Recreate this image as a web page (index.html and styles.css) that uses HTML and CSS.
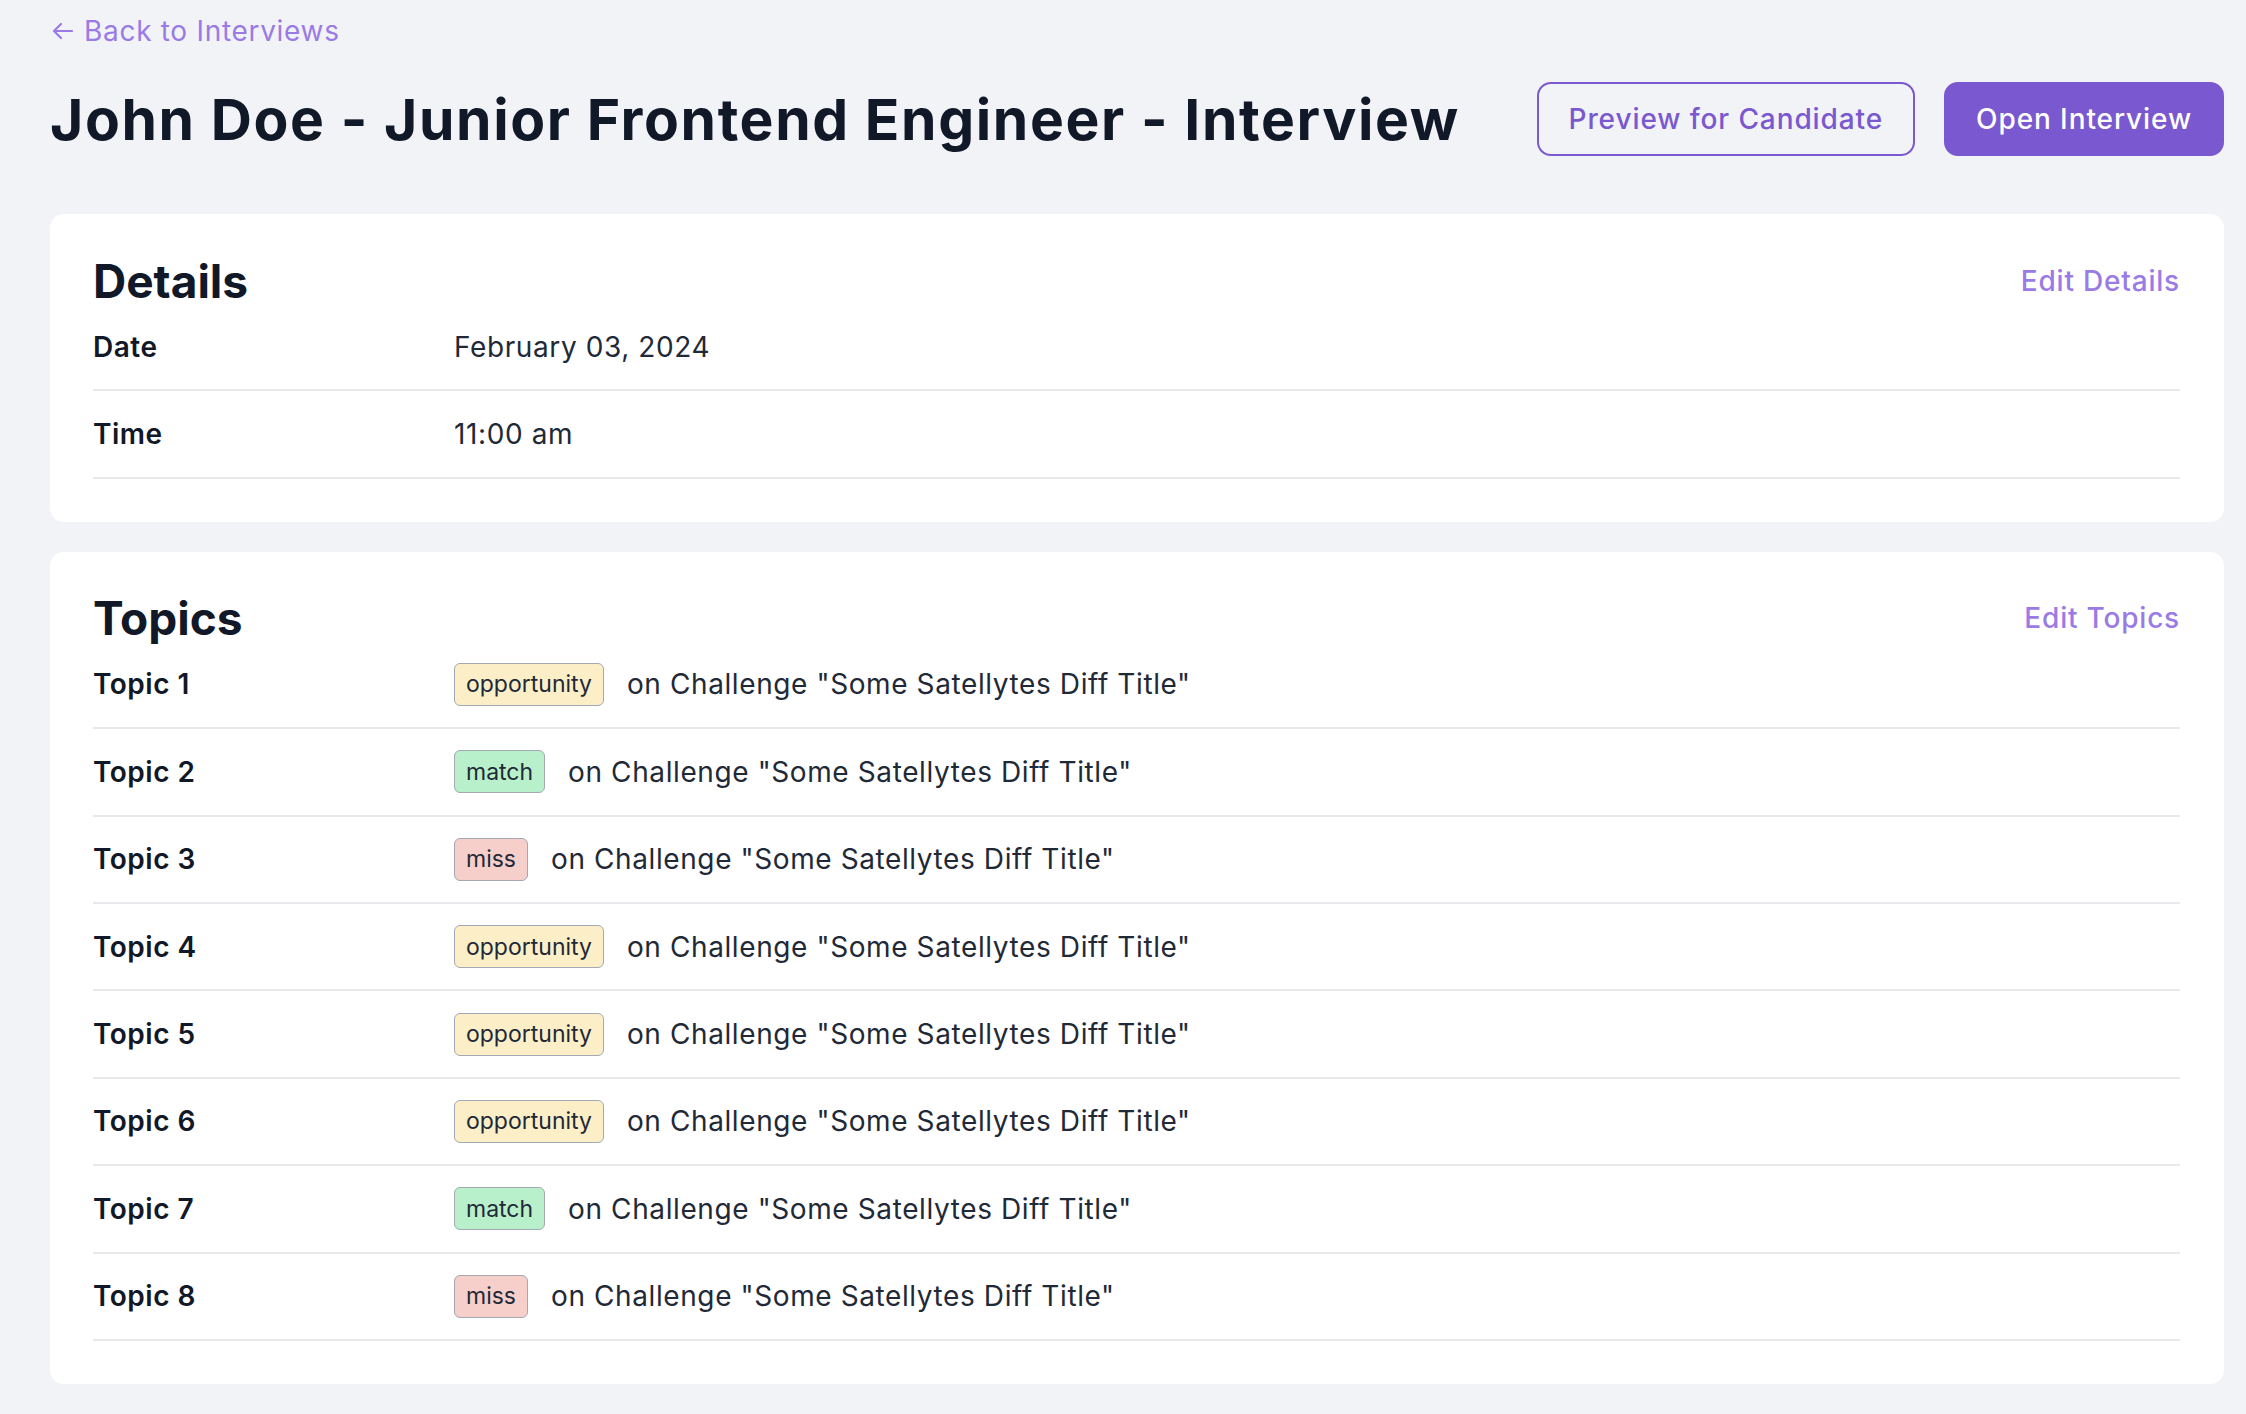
FILE: index.html
```html
<!DOCTYPE html>
<html lang="en">
<head>
    <meta charset="UTF-8">
    <meta name="viewport" content="width=device-width, initial-scale=1.0">
    <title>John Doe - Junior Frontend Engineer - Interview</title>
    <link rel="stylesheet" href="styles.css">
</head>
<body>
    <div class="page">
        <a href="#" class="back-link">
            <svg class="back-arrow" width="21" height="18" viewBox="0 0 21 18" fill="none" stroke="currentColor" stroke-width="2.2" stroke-linecap="round" stroke-linejoin="round">
                <path d="M20 9H2M9 2L2 9l7 7"/>
            </svg>
            Back to Interviews
        </a>

        <div class="page-header">
            <h1>John Doe - Junior Frontend Engineer - Interview</h1>
            <div class="header-actions">
                <button class="btn btn-outline">Preview for Candidate</button>
                <button class="btn btn-primary">Open Interview</button>
            </div>
        </div>

        <section class="card">
            <div class="card-header">
                <h2>Details</h2>
                <a href="#" class="edit-link">Edit Details</a>
            </div>
            <div class="row">
                <div class="row-label">Date</div>
                <div class="row-value">February 03, 2024</div>
            </div>
            <div class="row">
                <div class="row-label">Time</div>
                <div class="row-value">11:00 am</div>
            </div>
        </section>

        <section class="card">
            <div class="card-header">
                <h2>Topics</h2>
                <a href="#" class="edit-link">Edit Topics</a>
            </div>
            <div class="row">
                <div class="row-label">Topic 1</div>
                <div class="row-value"><span class="badge badge-opportunity">opportunity</span> on Challenge "Some Satellytes Diff Title"</div>
            </div>
            <div class="row">
                <div class="row-label">Topic 2</div>
                <div class="row-value"><span class="badge badge-match">match</span> on Challenge "Some Satellytes Diff Title"</div>
            </div>
            <div class="row">
                <div class="row-label">Topic 3</div>
                <div class="row-value"><span class="badge badge-miss">miss</span> on Challenge "Some Satellytes Diff Title"</div>
            </div>
            <div class="row">
                <div class="row-label">Topic 4</div>
                <div class="row-value"><span class="badge badge-opportunity">opportunity</span> on Challenge "Some Satellytes Diff Title"</div>
            </div>
            <div class="row">
                <div class="row-label">Topic 5</div>
                <div class="row-value"><span class="badge badge-opportunity">opportunity</span> on Challenge "Some Satellytes Diff Title"</div>
            </div>
            <div class="row">
                <div class="row-label">Topic 6</div>
                <div class="row-value"><span class="badge badge-opportunity">opportunity</span> on Challenge "Some Satellytes Diff Title"</div>
            </div>
            <div class="row">
                <div class="row-label">Topic 7</div>
                <div class="row-value"><span class="badge badge-match">match</span> on Challenge "Some Satellytes Diff Title"</div>
            </div>
            <div class="row">
                <div class="row-label">Topic 8</div>
                <div class="row-value"><span class="badge badge-miss">miss</span> on Challenge "Some Satellytes Diff Title"</div>
            </div>
        </section>
    </div>
</body>
</html>
```

FILE: styles.css
```css
:root {
    --primary: #7a58cf;
    --link: #9a7be6;
    --text: #111827;
    --text-soft: #1f2937;
    --background: #f2f3f7;
    --divider: #e8e9ed;
}

* {
    margin: 0;
    padding: 0;
    box-sizing: border-box;
    font-family: Inter, 'Noto Sans', sans-serif;
}

body {
    background-color: var(--background);
    color: var(--text);
}

.page {
    padding: 11px 22px 30px 50px;
}

.back-link {
    display: inline-flex;
    align-items: center;
    gap: 11px;
    height: 40px;
    padding-left: 2px;
    color: var(--link);
    font-size: 28px;
    letter-spacing: 0.7px;
    text-decoration: none;
}

.page-header {
    display: flex;
    justify-content: space-between;
    align-items: center;
    margin-top: 31px;
}

.page-header h1 {
    font-size: 57px;
    font-weight: 700;
    letter-spacing: 1.6px;
    color: var(--text);
}

.header-actions {
    display: flex;
    gap: 29px;
}

.btn {
    height: 74px;
    padding: 0 30px;
    border-radius: 14px;
    font-size: 28px;
    font-weight: 500;
    letter-spacing: 0.9px;
    cursor: pointer;
}

.btn-outline {
    background: transparent;
    border: 2px solid var(--primary);
    color: var(--primary);
}

.btn-primary {
    background: var(--primary);
    border: 2px solid var(--primary);
    color: white;
}

.card {
    background: white;
    border-radius: 14px;
    padding: 43px 44px 43px 43px;
    margin-top: 58px;
}

.card + .card {
    margin-top: 30px;
}

.card-header {
    display: flex;
    justify-content: space-between;
    align-items: center;
    height: 47px;
}

.card-header h2 {
    font-size: 46px;
    font-weight: 700;
    color: var(--text);
}

.edit-link {
    color: var(--link);
    font-size: 28px;
    font-weight: 500;
    letter-spacing: 0.8px;
    text-decoration: none;
}

.row {
    display: flex;
    align-items: center;
    height: 87.4px;
    border-bottom: 2px solid var(--divider);
}

.row-label {
    width: 361px;
    flex-shrink: 0;
    font-size: 28px;
    font-weight: 600;
    letter-spacing: 0.5px;
    color: var(--text);
}

.row-value {
    display: flex;
    align-items: center;
    gap: 23px;
    font-size: 28px;
    letter-spacing: 0.6px;
    color: var(--text-soft);
    white-space: nowrap;
}

.badge {
    display: inline-flex;
    align-items: center;
    height: 43px;
    padding: 0 11px;
    border: 1.5px solid #a3a8b3;
    border-radius: 6px;
    font-size: 23px;
    letter-spacing: 0;
    color: var(--text-soft);
}

.badge-opportunity {
    background: #fcefc8;
}

.badge-match {
    background: #b8f0cc;
}

.badge-miss {
    background: #f6cfcb;
}
```
